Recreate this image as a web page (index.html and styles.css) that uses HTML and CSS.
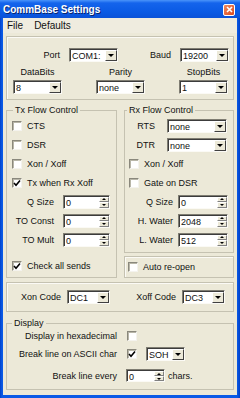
FILE: index.html
```html
<!DOCTYPE html>
<html>
<head>
    <link rel="stylesheet" href="styles.css">
</head>
<body>
    <div class="window">
        <div class="titlebar">
            <span class="title">CommBase Settings</span>
            <span class="close-btn">
                <svg width="7" height="7" viewBox="0 0 7 7"><path d="M1 1 L6 6 M6 1 L1 6" stroke="#fff" stroke-width="1.6"/></svg>
            </span>
        </div>
        <div class="client">
            <div class="menubar">
                <span class="menu-item">File</span>
                <span class="menu-item">Defaults</span>
            </div>

            <div class="content">
                <!-- port settings -->
                <div class="panel port-panel">
                    <div class="port-row">
                        <span class="port-label">Port</span>
                        <div class="combo port-combo"><span class="combo-text">COM1:</span><span class="combo-btn"></span></div>
                        <span class="port-label">Baud</span>
                        <div class="combo port-combo"><span class="combo-text">19200</span><span class="combo-btn"></span></div>
                    </div>
                    <div class="line-grid">
                        <span class="line-label">DataBits</span>
                        <span class="line-label">Parity</span>
                        <span class="line-label">StopBits</span>
                        <div class="combo"><span class="combo-text">8</span><span class="combo-btn"></span></div>
                        <div class="combo"><span class="combo-text">none</span><span class="combo-btn"></span></div>
                        <div class="combo"><span class="combo-text">1</span><span class="combo-btn"></span></div>
                    </div>
                </div>

                <div class="flow-row">
                    <fieldset class="group tx-group">
                        <legend class="group-legend">Tx Flow Control</legend>
                        <div class="check-row"><span class="check"></span>CTS</div>
                        <div class="check-row"><span class="check"></span>DSR</div>
                        <div class="check-row"><span class="check"></span>Xon / Xoff</div>
                        <div class="check-row"><span class="check checked"><svg width="8" height="8" viewBox="0 0 8 8"><path d="M1 4 L3 6.2 L7 1.5" fill="none" stroke="#000" stroke-width="1.6"/></svg></span>Tx when Rx Xoff</div>
                        <div class="field-row first-field">
                            <span class="field-label tx-label">Q Size</span>
                            <div class="spin tx-spin"><span class="spin-text">0</span><span class="spin-btn"><span class="spin-up"></span><span class="spin-down"></span></span></div>
                        </div>
                        <div class="field-row">
                            <span class="field-label tx-label">TO Const</span>
                            <div class="spin tx-spin"><span class="spin-text">0</span><span class="spin-btn"><span class="spin-up"></span><span class="spin-down"></span></span></div>
                        </div>
                        <div class="field-row">
                            <span class="field-label tx-label">TO Mult</span>
                            <div class="spin tx-spin"><span class="spin-text">0</span><span class="spin-btn"><span class="spin-up"></span><span class="spin-down"></span></span></div>
                        </div>
                        <div class="check-row send-row"><span class="check checked"><svg width="8" height="8" viewBox="0 0 8 8"><path d="M1 4 L3 6.2 L7 1.5" fill="none" stroke="#000" stroke-width="1.6"/></svg></span>Check all sends</div>
                    </fieldset>

                    <div class="rx-col">
                        <fieldset class="group rx-group">
                            <legend class="group-legend">Rx Flow Control</legend>
                            <div class="field-row">
                                <span class="field-label pin-label">RTS</span>
                                <div class="combo pin-combo"><span class="combo-text">none</span><span class="combo-btn"></span></div>
                            </div>
                            <div class="field-row">
                                <span class="field-label pin-label">DTR</span>
                                <div class="combo pin-combo"><span class="combo-text">none</span><span class="combo-btn"></span></div>
                            </div>
                            <div class="check-row"><span class="check"></span>Xon / Xoff</div>
                            <div class="check-row"><span class="check"></span>Gate on DSR</div>
                            <div class="field-row first-field">
                                <span class="field-label rx-label">Q Size</span>
                                <div class="spin rx-spin"><span class="spin-text">0</span><span class="spin-btn"><span class="spin-up"></span><span class="spin-down"></span></span></div>
                            </div>
                            <div class="field-row">
                                <span class="field-label rx-label">H. Water</span>
                                <div class="spin rx-spin"><span class="spin-text">2048</span><span class="spin-btn"><span class="spin-up"></span><span class="spin-down"></span></span></div>
                            </div>
                            <div class="field-row">
                                <span class="field-label rx-label">L. Water</span>
                                <div class="spin rx-spin"><span class="spin-text">512</span><span class="spin-btn"><span class="spin-up"></span><span class="spin-down"></span></span></div>
                            </div>
                        </fieldset>
                        <div class="panel reopen-panel">
                            <div class="check-row"><span class="check"></span>Auto re-open</div>
                        </div>
                    </div>
                </div>

                <div class="panel xon-panel">
                    <span class="xon-label">Xon Code</span>
                    <div class="combo code-combo"><span class="combo-text">DC1</span><span class="combo-btn"></span></div>
                    <span class="xoff-label">Xoff Code</span>
                    <div class="combo code-combo"><span class="combo-text">DC3</span><span class="combo-btn"></span></div>
                </div>

                <fieldset class="group display-group">
                    <legend class="group-legend">Display</legend>
                    <div class="disp-row hex-row">
                        <span class="disp-label">Display in hexadecimal</span>
                        <span class="check"></span>
                    </div>
                    <div class="disp-row break-row">
                        <span class="disp-label">Break line on ASCII char</span>
                        <span class="check checked"><svg width="8" height="8" viewBox="0 0 8 8"><path d="M1 4 L3 6.2 L7 1.5" fill="none" stroke="#000" stroke-width="1.6"/></svg></span>
                        <div class="combo soh-combo"><span class="combo-text">SOH</span><span class="combo-btn"></span></div>
                    </div>
                    <div class="disp-row every-row">
                        <span class="disp-label">Break line every</span>
                        <div class="spin every-spin"><span class="spin-text">0</span><span class="spin-btn"><span class="spin-up"></span><span class="spin-down"></span></span></div>
                        <span class="chars">chars.</span>
                    </div>
                </fieldset>
            </div>
        </div>
    </div>
</body>
</html>
```

FILE: styles.css
```css
body {
    margin: 0;
    font-family: "Liberation Sans", Arial, sans-serif;
    font-size: 9px;
    color: #111;
}

.window {
    width: 240px;
    height: 398px;
    box-sizing: border-box;
    padding: 0 3px 3px 3px;
    background: linear-gradient(to right, #0040c8, #0a5ae6 2px, #0a5ae6 237px, #0040c8);
}

.titlebar {
    height: 18px;
    margin: 0 -3px;
    display: flex;
    align-items: center;
    padding: 0 5px 0 3px;
    background: linear-gradient(to bottom, #4a94fa 0, #1464ec 3px, #0a5ae4 12px, #0a52d8 18px);
}

.title {
    color: #fff;
    font-weight: bold;
    font-size: 10px;
    text-shadow: 1px 1px 0 #0a246a;
}

.close-btn {
    margin-left: auto;
    width: 12px;
    height: 12px;
    box-sizing: border-box;
    border: 1px solid #fff;
    border-radius: 2px;
    background: linear-gradient(to bottom right, #f08a60, #dc4a1e);
    display: flex;
    align-items: center;
    justify-content: center;
    margin-top: 1px;
}

.client {
    height: 377px;
    background: #ece9d8;
}

.menubar {
    height: 15px;
    display: flex;
    align-items: center;
    gap: 11px;
    padding-left: 4px;
    font-size: 10px;
    background: #efecdf;
}

.content {
    padding: 0 3px;
}

/* etched boxes */
.panel {
    border: 1px solid #c5c2b1;
    box-shadow: inset 1px 1px 0 #fbfaf5;
    box-sizing: border-box;
}

.group {
    margin: 0;
    padding: 0 5px;
    min-width: 0;
    border: 1px solid #c5c2b1;
}

.group-legend {
    padding: 0 2px;
    margin-left: 1px;
    line-height: 11px;
}

/* top panel */
.port-panel {
    margin-top: 3px;
    height: 64px;
    padding-top: 11px;
}

.port-row {
    display: flex;
    align-items: center;
    height: 14px;
}

.port-label {
    width: 53px;
    text-align: right;
    margin-right: 9px;
}

.port-combo {
    width: 49px;
}

.line-grid {
    display: grid;
    grid-template-columns: 49px 49px 49px;
    column-gap: 34px;
    padding-left: 6px;
    margin-top: 5px;
    row-gap: 3px;
}

.line-label {
    text-align: center;
    line-height: 10px;
}

/* combo box and spinner */
.combo, .spin {
    display: flex;
    height: 14px;
    box-sizing: border-box;
    background: #fff;
    border: 1px solid;
    border-color: #7f7d72 #fbfaf5 #fbfaf5 #7f7d72;
    box-shadow: inset 1px 1px 0 #3c3c3c;
    padding: 1px 0 0 2px;
}

.combo-text, .spin-text {
    line-height: 12px;
    flex: 1;
}

.combo-btn {
    width: 12px;
    box-sizing: border-box;
    background: #ece9d8;
    border: 1px solid;
    border-color: #fff #404040 #404040 #fff;
    display: flex;
    align-items: center;
    justify-content: center;
}

.combo-btn::after {
    content: '';
    border-left: 3px solid transparent;
    border-right: 3px solid transparent;
    border-top: 3px solid #000;
}

.spin-btn {
    width: 10px;
    display: flex;
    flex-direction: column;
}

.spin-up, .spin-down {
    flex: 1;
    box-sizing: border-box;
    background: #ece9d8;
    border: 1px solid;
    border-color: #fff #808080 #808080 #fff;
    display: flex;
    align-items: center;
    justify-content: center;
}

.spin-up::after {
    content: '';
    border-left: 2px solid transparent;
    border-right: 2px solid transparent;
    border-bottom: 2px solid #000;
}

.spin-down::after {
    content: '';
    border-left: 2px solid transparent;
    border-right: 2px solid transparent;
    border-top: 2px solid #000;
}

/* check boxes */
.check {
    width: 10px;
    height: 10px;
    flex: none;
    box-sizing: border-box;
    background: #fff;
    border: 1px solid;
    border-color: #8a887c #f4f3ee #f4f3ee #8a887c;
    box-shadow: inset 1px 1px 0 #b8b6a8;
    display: flex;
    align-items: center;
    justify-content: center;
}

.check-row {
    height: 19px;
    display: flex;
    align-items: center;
    gap: 5px;
}

.field-row {
    height: 19px;
    display: flex;
    align-items: center;
}

.field-label {
    text-align: right;
    flex: none;
}

/* flow control columns */
.flow-row {
    display: flex;
    gap: 7px;
    margin-top: 5px;
    height: 173px;
}

.tx-group {
    width: 111px;
    box-sizing: border-box;
}

.tx-label {
    width: 42px;
    margin-right: 9px;
}

.tx-spin {
    width: 47px;
}

.send-row {
    margin-top: 7px;
}

.rx-col {
    width: 110px;
    display: flex;
    flex-direction: column;
    gap: 3px;
}

.rx-group {
    flex: 1;
    padding-left: 4px;
}

.rx-group .group-legend {
    margin-left: -2px;
}

.pin-label {
    width: 26px;
    margin-right: 12px;
}

.pin-combo {
    width: 60px;
}

.rx-label {
    width: 44px;
    margin-right: 5px;
}

.rx-spin {
    width: 50px;
}

.reopen-panel {
    height: 22px;
    padding-left: 3px;
}

.reopen-panel .check-row {
    height: 20px;
}

/* xon / xoff codes */
.xon-panel {
    margin-top: 4px;
    height: 30px;
    display: flex;
    align-items: center;
}

.xon-label {
    width: 54px;
    text-align: right;
    margin-right: 6px;
}

.xoff-label {
    width: 66px;
    text-align: right;
    margin-right: 6px;
}

.code-combo {
    width: 43px;
}

/* display group */
.display-group {
    margin-top: 6px;
    padding: 0 0 3px 0;
}

.display-group .group-legend {
    margin-left: 5px;
}

.disp-row {
    display: flex;
    align-items: center;
}

.disp-label {
    width: 110px;
    text-align: right;
    margin-right: 10px;
}

.hex-row {
    height: 14px;
}

.break-row {
    height: 22px;
}

.every-row {
    height: 21px;
}

.soh-combo {
    width: 39px;
    margin-left: 9px;
}

.every-spin {
    width: 39px;
    height: 13px;
    margin-left: -1px;
}

.chars {
    margin-left: 3px;
}
```
